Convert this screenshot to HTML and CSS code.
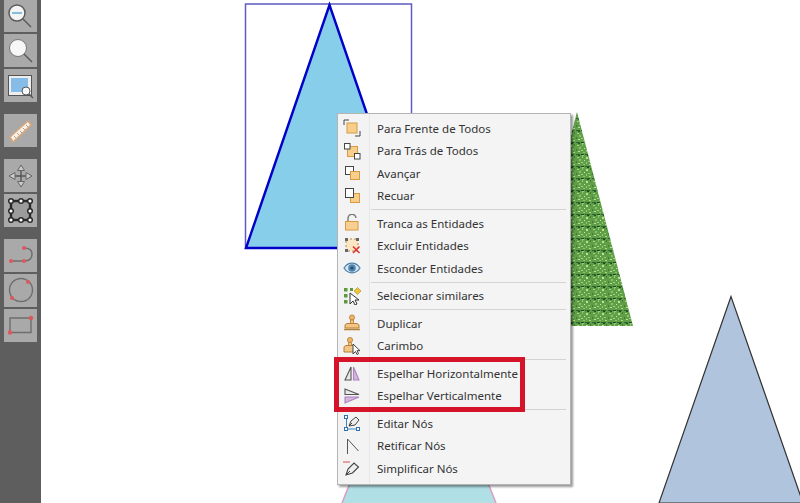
FILE: index.html
```html
<!DOCTYPE html>
<html lang="pt">
<head>
    <meta charset="UTF-8">
    <meta name="viewport" content="width=device-width, initial-scale=1.0">
    <title>Espelhar Entidades</title>
    <link rel="stylesheet" href="styles.css">
</head>
<body>
    <div class="tela">
        <div class="barra-ferramentas">
            <div class="grupo-botoes primeiro">
                <div class="botao"><svg width="33" height="34" viewBox="0 -1 33 34"><circle cx="13" cy="13" r="8" fill="#f4f4f4" stroke="#5a5a5a" stroke-width="1.5"/><path d="M8 13h10" stroke="#86bcdc" stroke-width="2"/><path d="M19 19l8 8" stroke="#5a5a5a" stroke-width="1.5"/></svg></div>
                <div class="botao"><svg width="33" height="33" viewBox="0 0 33 33"><circle cx="14" cy="14" r="8.5" fill="#f7f7f7" stroke="#777"/><path d="M20 20l8 8" stroke="#5a5a5a" stroke-width="1.5"/></svg></div>
                <div class="botao"><svg width="33" height="33" viewBox="0 0 33 33"><rect x="4.5" y="6.5" width="23" height="20" fill="#eee" stroke="#555"/><rect x="7" y="9" width="17" height="14" fill="#85bde8"/><circle cx="22" cy="22" r="4" fill="#fafafa" stroke="#555"/><path d="M25 25l4 4" stroke="#555" stroke-width="1.5"/></svg></div>
            </div>
            <div class="grupo-botoes">
                <div class="botao"><svg width="33" height="33" viewBox="0 0 33 33"><path d="M6 23L24 7l3 4L9 28z" fill="#f7f1e8" stroke="#d9a77c" stroke-width="1.5"/><path d="M10 22l2 2M13 19l2 2M16 17l2 2M19 14l2 2M22 11l2 2" stroke="#b99c82"/></svg></div>
            </div>
            <div class="grupo-botoes">
                <div class="botao"><svg width="33" height="33" viewBox="0 0 33 33" fill="#c9c9c9" stroke="#666"><path d="M17 11v12M11 17h12" stroke="#555" stroke-width="1.4" fill="none"/><path d="M17 6l3.5 5.5h-7zM17 28l3.5-5.5h-7zM5 17l6-3.5v7zM28 17l-6-3.5v7z"/></svg></div>
                <div class="botao"><svg width="33" height="33" viewBox="0 0 33 33"><rect x="7" y="7" width="19" height="19" fill="#9c9c9c" stroke="#2a2a2a" stroke-width="2.4"/><g fill="#fff" stroke="#2a2a2a" stroke-width="1.5"><circle cx="7" cy="7" r="2.3"/><circle cx="17" cy="7" r="2.3"/><circle cx="26" cy="7" r="2.3"/><circle cx="7" cy="17" r="2.3"/><circle cx="26" cy="17" r="2.3"/><circle cx="7" cy="26" r="2.3"/><circle cx="17" cy="26" r="2.3"/><circle cx="26" cy="26" r="2.3"/></g></svg></div>
            </div>
            <div class="grupo-botoes">
                <div class="botao"><svg width="33" height="33" viewBox="0 0 33 33"><path d="M7 22H20C27 22 28 18 28 15C28 11 25 9 20 9" fill="none" stroke="#6e6e6e" stroke-width="1.5"/><g fill="#e0565b"><circle cx="7" cy="22" r="2"/><circle cx="20" cy="22" r="2"/><circle cx="20" cy="9" r="2"/></g></svg></div>
                <div class="botao"><svg width="33" height="33" viewBox="0 0 33 33"><circle cx="17" cy="16" r="11.5" fill="none" stroke="#6e6e6e" stroke-width="1.4"/><g fill="#e0565b"><circle cx="24" cy="8" r="2"/><circle cx="8" cy="24" r="2"/></g></svg></div>
                <div class="botao"><svg width="33" height="33" viewBox="0 0 33 33"><path d="M6 23.5V9h21v14.5z" fill="none" stroke="#6e6e6e" stroke-width="1.4"/><g fill="#e0565b"><circle cx="27" cy="9" r="2.2"/><circle cx="6" cy="23.5" r="2.2"/></g></svg></div>
            </div>
        </div>

        <!-- formas do desenho -->
        <svg class="desenho" width="800" height="503" viewBox="0 0 800 503">
            <defs>
                <pattern id="grama" width="16" height="12" patternUnits="userSpaceOnUse">
                    <rect width="16" height="12" fill="#5f9f4a"/>
                    <rect x="1" y="1" width="2" height="1" fill="#a6d27a"/>
                    <rect x="6" y="0" width="1" height="2" fill="#8fc766"/>
                    <rect x="10" y="1" width="2" height="2" fill="#bfe08e"/>
                    <rect x="14" y="0" width="1" height="2" fill="#3f7c36"/>
                    <rect x="3" y="3" width="2" height="2" fill="#8cc462"/>
                    <rect x="8" y="4" width="1" height="1" fill="#cfe79a"/>
                    <rect x="12" y="5" width="2" height="1" fill="#9ccf70"/>
                    <rect x="0" y="5" width="1" height="2" fill="#3f7c36"/>
                    <rect x="5" y="6" width="2" height="1" fill="#a6d27a"/>
                    <rect x="10" y="6" width="1" height="2" fill="#94ca6a"/>
                    <rect x="2" y="7" width="2" height="1" fill="#c2e08c"/>
                    <rect x="7" y="8" width="2" height="1" fill="#8cc462"/>
                    <rect x="13" y="8" width="2" height="1" fill="#b2d880"/>
                    <rect x="0" y="10" width="4" height="1" fill="#2c6429"/>
                    <rect x="5" y="10" width="3" height="1" fill="#1d4a20"/>
                    <rect x="9" y="10" width="5" height="1" fill="#2c6429"/>
                    <rect x="2" y="11" width="2" height="1" fill="#24552a"/>
                    <rect x="11" y="11" width="2" height="1" fill="#1d4a20"/>
                    <rect x="6" y="11" width="2" height="1" fill="#9ccf70"/>
                </pattern>
            </defs>
            <rect x="245.5" y="4" width="166" height="244" fill="#fff" stroke="#5c5cc2" stroke-width="1.5"/>
            <path d="M329.5 5L246 248H413z" fill="#87ceeb" stroke="#0000c8" stroke-width="2.4"/>
            <path d="M577 112L633 326H521z" fill="url(#grama)"/>
            <path d="M731 296.5L659 503H803z" fill="#b0c4de" stroke="#333" stroke-width="1.2"/>
            <path d="M342 503L352 478H486L496 503" fill="#b0e0e6" stroke="#d79fc3" stroke-width="1.5"/>
        </svg>

        <ul class="menu">
            <li class="item"><svg width="18" height="18" viewBox="0 0 18 18"><path d="M1 6V1h5M17 12v5h-5" fill="none" stroke="#444"/><rect x="4" y="4" width="10" height="10" fill="#f8cf8a" stroke="#d89a45"/></svg>Para Frente de Todos</li>
            <li class="item"><svg width="18" height="18" viewBox="0 0 18 18"><rect x="4.5" y="4.5" width="10" height="10" fill="#f8cf8a" stroke="#d89a45"/><rect x="1.5" y="1.5" width="5.5" height="5.5" fill="#fff" stroke="#444"/><rect x="11.5" y="11.5" width="5.5" height="5.5" fill="#fff" stroke="#444"/></svg>Para Trás de Todos</li>
            <li class="item"><svg width="18" height="18" viewBox="0 0 18 18"><rect x="2.5" y="2.5" width="8" height="8" fill="#fff" stroke="#444"/><rect x="7.5" y="7.5" width="9" height="8" fill="#f8cf8a" stroke="#d89a45"/></svg>Avançar</li>
            <li class="item"><svg width="18" height="18" viewBox="0 0 18 18"><rect x="7.5" y="6.5" width="9" height="9" fill="#f8cf8a" stroke="#d89a45"/><rect x="2.5" y="1.5" width="8" height="9" fill="#fff" stroke="#444"/></svg>Recuar</li>
            <li class="separador"></li>
            <li class="item"><svg width="18" height="18" viewBox="0 0 18 18"><path d="M5 7V4.5a4 4 0 0 1 8 -.5" fill="none" stroke="#777" stroke-width="1.4"/><rect x="2.5" y="7.5" width="12.5" height="8.5" fill="#f8cf90" stroke="#d89a45"/></svg>Tranca as Entidades</li>
            <li class="item"><svg width="18" height="18" viewBox="0 0 18 18"><rect x="3" y="2" width="12" height="12" fill="#fbe7c4" stroke="#b88a4a" stroke-dasharray="2 2"/><g fill="#666"><rect x="2" y="1" width="3" height="3"/><rect x="13" y="1" width="3" height="3"/><rect x="2" y="12" width="3" height="3"/></g><path d="M10 9.5l6.5 6.5M16.5 9.5l-6.5 6.5" stroke="#d8342f" stroke-width="1.5"/></svg>Excluir Entidades</li>
            <li class="item"><svg width="18" height="18" viewBox="0 0 18 18"><path d="M1 9c4-6.5 12-6.5 16 0-4 6.5-12 6.5-16 0z" fill="#d5e6f3" stroke="#4b7fa6" stroke-width="1.2"/><circle cx="9" cy="9" r="3.8" fill="#4f86ad"/><circle cx="9" cy="9" r="1.6" fill="#24506f"/></svg>Esconder Entidades</li>
            <li class="separador"></li>
            <li class="item"><svg width="18" height="18" viewBox="0 0 18 18"><g fill="#5d9a3c"><rect x="1" y="1" width="3.5" height="3.5"/><rect x="1" y="7" width="3.5" height="3.5"/><rect x="1" y="13" width="3.5" height="3.5"/><rect x="7" y="1" width="3" height="3"/></g><path d="M11 4l3.5-3.5L18 4l-3.5 3.5z" fill="#f0c43a" stroke="#a8862a" stroke-width=".6"/><path d="M7 6v11l3-3 2 4 2-1-2-4h4z" fill="#fff" stroke="#333"/></svg>Selecionar similares</li>
            <li class="separador"></li>
            <li class="item"><svg width="18" height="18" viewBox="0 0 18 18"><circle cx="9" cy="3.5" r="2.6" fill="#eeb56a" stroke="#b87f35" stroke-width=".8"/><path d="M7.5 6h3v4h-3z" fill="#f3c688" stroke="#b87f35" stroke-width=".8"/><path d="M2 12c0-2 1-2.5 3-2.5h8c2 0 3 .5 3 2.5v2H2z" fill="#f3c688" stroke="#b87f35"/><path d="M1 15.5h16" stroke="#b87f35" stroke-width="1.5"/></svg>Duplicar</li>
            <li class="item"><svg width="18" height="18" viewBox="0 0 18 18"><circle cx="7" cy="3" r="2.6" fill="#eeb56a" stroke="#b87f35" stroke-width=".8"/><path d="M5.5 5.5h3v3h-3z" fill="#f3c688" stroke="#b87f35" stroke-width=".8"/><path d="M1 11c0-2 1-2.5 3-2.5h5c2 0 3 .5 3 2.5v4H1z" fill="#f3c688" stroke="#b87f35"/><path d="M10 7v10l2.5-2.5 1.500 3 1.500-.8-1.500-3h3z" fill="#fff" stroke="#333" stroke-width=".9"/></svg>Carimbo</li>
            <li class="separador"></li>
            <li class="item"><svg width="18" height="18" viewBox="0 0 18 18"><path d="M8 3v13H2z" fill="#e8e8e8" stroke="#555" stroke-width="1.1"/><path d="M10.5 3v13H16z" fill="#d6b4de" stroke="#ab84c0" stroke-width="1.1"/></svg>Espelhar Horizontalmente</li>
            <li class="item"><svg width="18" height="18" viewBox="0 0 18 18"><path d="M2 7.5V2l14 5.5z" fill="#e8e8e8" stroke="#555" stroke-width="1.1"/><path d="M2 10v6l14-6z" fill="#d6b4de" stroke="#ab84c0" stroke-width="1.1"/></svg>Espelhar Verticalmente</li>
            <li class="separador"></li>
            <li class="item"><svg width="18" height="18" viewBox="0 0 18 18"><path d="M3.5 3v12h11" fill="none" stroke="#3d83c4"/><path d="M6 12l2-5 5-4 3 3-4 5z" fill="#eee" stroke="#444"/><path d="M6 12l3-3" stroke="#444"/><g fill="#fff" stroke="#2f72ad"><rect x="1.5" y="1.5" width="3" height="3"/><rect x="1.5" y="13.5" width="3" height="3"/><rect x="13.5" y="13.5" width="3" height="3"/></g></svg>Editar Nós</li>
            <li class="item"><svg width="18" height="18" viewBox="0 0 18 18"><path d="M4.5 17V2l11 12" fill="none" stroke="#555"/></svg>Retificar Nós</li>
            <li class="item"><svg width="18" height="18" viewBox="0 0 18 18"><path d="M0 3h7" stroke="#d8504c"/><path d="M3 16l2-6 6-6 4.5 4-6 6z" fill="#eee" stroke="#444" stroke-width="1.1"/><path d="M3 16l4-4" stroke="#444"/></svg>Simplificar Nós</li>
        </ul>

        <div class="destaque"></div>
    </div>
</body>
</html>
```

FILE: styles.css
```css
html, body {
    margin: 0;
    padding: 0;
    background-color: #fff;
}

.tela {
    position: relative;
    width: 800px;
    height: 503px;
    overflow: hidden;
    font-family: "Noto Sans", "Open Sans", sans-serif;
}

.barra-ferramentas {
    position: absolute;
    top: 0;
    left: 0;
    bottom: 0;
    width: 33px;
    padding: 0 4px;
    background-color: #5e5e5e;
    display: flex;
    flex-direction: column;
    gap: 12px;
}

.grupo-botoes {
    display: flex;
    flex-direction: column;
    gap: 2px;
}

.primeiro {
    margin-top: -1px;
}

.botao {
    width: 33px;
    height: 33px;
    background-color: #a9a9a9;
}

.botao svg {
    display: block;
}

.desenho {
    position: absolute;
    top: 0;
    left: 0;
}

.menu {
    position: absolute;
    top: 113px;
    left: 337px;
    width: 230px;
    height: 367px;
    margin: 0;
    padding: 3px 2px 0 0;
    list-style: none;
    background: linear-gradient(to right, #f3f3f3 31px, #e6e6e6 31px, #e6e6e6 32px, #f4f4f4 32px);
    border: 1px solid #b4b4b4;
    box-shadow: 2px 2px 2px rgba(0, 0, 0, 0.4);
    font-size: 11.5px;
    color: #333;
}

.item {
    height: 22.5px;
    display: flex;
    align-items: center;
}

.item svg {
    flex: none;
    margin: 0 16px 0 5px;
}

.separador {
    height: 1px;
    margin: 2px 2px 2px 33px;
    background-color: #d4d4d4;
}

.destaque {
    position: absolute;
    top: 357px;
    left: 334px;
    width: 181px;
    height: 45px;
    border: 5px solid #d5142a;
}
```
